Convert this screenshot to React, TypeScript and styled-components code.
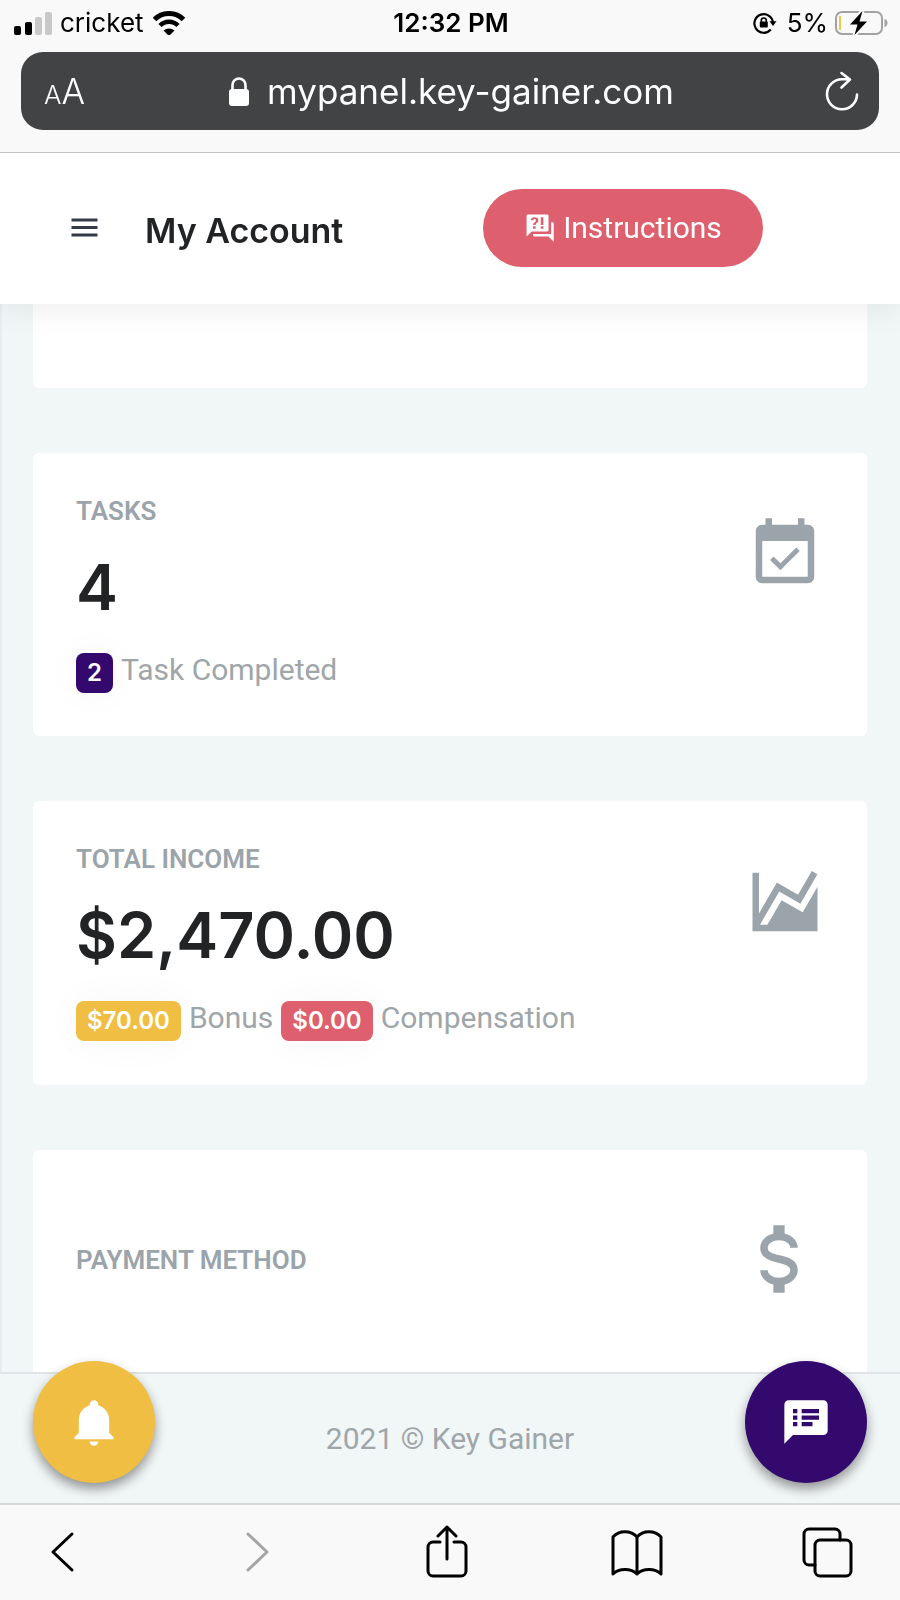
import React from 'react';
import styled, { createGlobalStyle } from 'styled-components';

const ui = "Inter, 'Liberation Sans', sans-serif";
const body = "Roboto, 'Liberation Sans', sans-serif";

const colors = {
  chrome: '#f9f9fa',
  page: '#f1f6f7',
  ink: '#212325',
  muted: '#9aa4aa',
  text: '#9fa6aa',
  amber: '#efbe43',
  rose: '#de5f6d',
  violet: '#33096e',
};

const GlobalStyle = createGlobalStyle`
  *, *::before, *::after { box-sizing: border-box; }
  body { margin: 0; background: ${colors.page}; }
  button { border: 0; padding: 0; background: none; cursor: pointer; font: inherit; color: inherit; }
  h1, h2, p { margin: 0; }
  svg { display: block; flex: none; }
`;

const Screen = styled.div`
  display: flex;
  flex-direction: column;
  height: 100vh;
  font-family: ${body};
  color: ${colors.ink};
`;

const Chrome = styled.div`
  position: relative;
  z-index: 2;
  flex: none;
  background: ${colors.chrome};
  border-bottom: 1px solid #bfc0c2;
  padding-bottom: 22px;
`;

const StatusBar = styled.div`
  display: grid;
  grid-template-columns: 1fr auto 1fr;
  align-items: center;
  height: 52px;
  padding: 0 12px 6px 14px;
  font-family: ${ui};
  font-size: 26px;
  line-height: 32px;
  color: #000;
`;

const StatusGroup = styled.div<{ $end?: boolean; $gap: number }>`
  display: flex;
  align-items: center;
  justify-content: ${(p) => (p.$end ? 'flex-end' : 'flex-start')};
  gap: ${(p) => p.$gap}px;
`;

const Clock = styled.time`
  font-weight: 600;
`;

const AddressBar = styled.div`
  display: grid;
  grid-template-columns: 1fr auto 1fr;
  align-items: center;
  height: 78px;
  margin: 0 21px;
  padding: 0 20px 0 23px;
  border-radius: 22px;
  background: #424344;
  color: #fff;
  font-family: ${ui};
`;

const TextSize = styled.button`
  display: flex;
  align-items: baseline;
  justify-self: start;
  padding-top: 4px;
  font-size: 35px;
  font-weight: 300;
  line-height: 44px;
  small { font-size: 26px; }
`;

const Address = styled.button`
  display: flex;
  align-items: center;
  gap: 18px;
  font-size: 35px;
  line-height: 44px;
`;

const Reload = styled.button`
  justify-self: end;
`;

const Header = styled.header`
  position: relative;
  z-index: 1;
  flex: none;
  display: flex;
  align-items: center;
  height: 151px;
  padding: 0 137px 2px 65px;
  background: #fff;
  box-shadow: 0 6px 30px rgba(0, 0, 0, 0.07);
`;

const Title = styled.h1`
  margin-left: 41px;
  padding-top: 6px;
  font-family: ${ui};
  font-size: 34px;
  font-weight: 600;
  line-height: 44px;
`;

const Instructions = styled.button`
  display: flex;
  align-items: center;
  justify-content: center;
  gap: 8px;
  width: 280px;
  height: 78px;
  margin-left: auto;
  border-radius: 39px;
  background: ${colors.rose};
  color: #fff;
  font-size: 30px;
  line-height: 40px;
`;

const Content = styled.main`
  flex: 1 1 0;
  min-height: 0;
  overflow-y: auto;
  scrollbar-width: none;
  display: flex;
  flex-direction: column;
  gap: 65px;
  padding: 0 33px 0 31px;
  border-left: 2px solid #e9edef;
  background: ${colors.page};
`;

const Card = styled.section<{ $height: number; $middle?: boolean }>`
  flex: none;
  display: flex;
  justify-content: space-between;
  align-items: flex-start;
  min-height: ${(p) => p.$height}px;
  padding: ${(p) => (p.$middle ? '94px' : '42px')} 43px 0;
  border-radius: 6px;
  background: #fff;
`;

const PreviousCard = styled(Card)`
  padding: 0;
  border-radius: 0 0 6px 6px;
`;

const CardIcon = styled.svg<{ $lift: number }>`
  margin-top: ${(p) => p.$lift}px;
  fill: ${colors.muted};
`;

const Label = styled.h2`
  font-family: ${body};
  font-size: 26px;
  font-weight: 600;
  line-height: 32px;
  text-transform: uppercase;
  color: ${colors.muted};
`;

const Amount = styled.p`
  margin-top: 20px;
  font-family: ${ui};
  font-size: 63px;
  font-weight: 600;
  line-height: 80px;
`;

const Details = styled.p`
  display: flex;
  align-items: center;
  gap: 8px;
  margin-top: 26px;
  font-size: 30px;
  line-height: 40px;
  color: ${colors.text};
`;

const DetailText = styled.span`
  padding-bottom: 6px;
  line-height: 34px;
`;

const Badge = styled.span<{ $color: string }>`
  padding: 0 11px;
  border-radius: 8px;
  background: ${(p) => p.$color};
  box-shadow: 0 0 40px rgba(0, 0, 0, 0.04);
  color: #fff;
  font-family: ${ui};
  font-size: 24px;
  font-weight: 600;
  line-height: 40px;
`;

const Footer = styled.footer`
  position: relative;
  z-index: 1;
  flex: none;
  display: flex;
  align-items: center;
  justify-content: center;
  height: 131px;
  border-top: 2px solid #e0e4e6;
  background: ${colors.page};
  font-size: 30px;
  line-height: 40px;
  color: ${colors.text};
`;

const Fab = styled.button<{ $side: 'left' | 'right'; $color: string }>`
  position: absolute;
  top: -13px;
  ${(p) => p.$side}: 33px;
  display: grid;
  place-items: center;
  width: 122px;
  height: 122px;
  border-radius: 50%;
  background: ${(p) => p.$color};
  box-shadow: 0 6px 12px rgba(0, 0, 0, 0.4);
  svg { fill: #fff; }
`;

const Toolbar = styled.nav`
  flex: none;
  display: flex;
  align-items: center;
  justify-content: space-between;
  height: 97px;
  padding: 0 45px 2px 36px;
  border-top: 2px solid #d6d8da;
  background: ${colors.chrome};
`;

const ToolButton = styled.button`
  svg {
    fill: none;
    stroke: #000;
    stroke-width: 3;
    stroke-linecap: round;
    stroke-linejoin: round;
  }
  &:disabled svg { stroke: #a5a5a7; }
`;

const Signal = () => (
  <svg width="38" height="24" viewBox="0 0 38 24" aria-label="Signal">
    <rect x="0" y="15" width="7" height="9" rx="2" />
    <rect x="11" y="11" width="7" height="13" rx="2" />
    <rect x="21" y="6" width="7" height="18" rx="2" fill="#c9c9ca" />
    <rect x="31" y="1" width="7" height="23" rx="2" fill="#c9c9ca" />
  </svg>
);

const Wifi = () => (
  <svg width="34" height="24" viewBox="0 0 34 24" aria-label="Wi-Fi">
    <path d="M2.500 8.500a20.500 20.500 0 0 1 29 0" fill="none" stroke="#000" strokeWidth="5" />
    <path d="M8 14.500a12.500 12.500 0 0 1 18 0" fill="none" stroke="#000" strokeWidth="4.500" />
    <path d="M11.500 19.500a8.500 8.500 0 0 1 11 0L17 25z" />
  </svg>
);

const RotationLock = () => (
  <svg width="27" height="22" viewBox="0 0 27 22" aria-label="Rotation locked">
    <path d="M17.800 17.500A9.300 9.300 0 1 1 20 11" fill="none" stroke="#000" strokeWidth="2.200" />
    <path d="M16.500 9.200h7L20 14z" />
    <path d="M8.300 10V8.500a2.500 2.500 0 0 1 5 0V10" fill="none" stroke="#000" strokeWidth="1.600" />
    <rect x="6.800" y="9.500" width="8" height="6" rx="1" />
  </svg>
);

const Battery = () => (
  <svg width="53" height="26" viewBox="0 0 53 26" aria-label="Battery charging">
    <rect x="1" y="2" width="46" height="22" rx="6" fill="none" stroke="#a2a2a4" strokeWidth="2" />
    <rect x="4" y="6" width="2" height="14" fill="#f2c945" />
    <path d="M49.500 9c4 1 4 7 0 8z" fill="#a2a2a4" />
    <path d="M27.500 1 15 14.500h7.500L19.500 25 32 11.500h-7.500z" stroke={colors.chrome} strokeWidth="4" />
    <path d="M27.500 1 15 14.500h7.500L19.500 25 32 11.500h-7.500z" />
  </svg>
);

const Lock = () => (
  <svg width="20" height="29" viewBox="0 0 20 29" fill="#fff" aria-hidden="true">
    <path d="M3.500 13V8a6.500 6.500 0 0 1 13 0v5" fill="none" stroke="#fff" strokeWidth="2.600" />
    <rect y="12" width="20" height="17" rx="3" />
  </svg>
);

const ReloadIcon = () => (
  <svg
    width="34"
    height="40"
    viewBox="0 0 34 40"
    fill="none"
    stroke="#fff"
    strokeWidth="2.600"
    strokeLinecap="round"
    strokeLinejoin="round"
    aria-hidden="true"
  >
    <path d="M24.500 8.300H17A15 15 0 1 0 32 23.500M16.500 2l8.500 6.500-8.500 8" />
  </svg>
);

const FaqIcon = () => (
  <svg width="31" height="31" viewBox="0 0 24 24" fill="#fff" aria-hidden="true">
    <path d="M18,15H6L2,19V3A1,1 0 0,1 3,2H18A1,1 0 0,1 19,3V14A1,1 0 0,1 18,15M23,9V23L19,19H8A1,1 0 0,1 7,18V17H21V8H22A1,1 0 0,1 23,9M8.190,4C7.320,4 6.620,4.200 6.080,4.590C5.560,5 5.300,5.570 5.310,6.360L5.320,6.390H7.250C7.260,6.090 7.350,5.860 7.530,5.700C7.710,5.550 7.930,5.470 8.190,5.470C8.500,5.470 8.760,5.570 8.940,5.750C9.120,5.940 9.200,6.200 9.200,6.500C9.200,6.820 9.130,7.090 8.970,7.320C8.830,7.550 8.620,7.750 8.360,7.910C7.850,8.250 7.500,8.550 7.310,8.820C7.110,9.080 7,9.500 7,10H9C9,9.690 9.040,9.440 9.130,9.260C9.220,9.080 9.390,8.900 9.640,8.740C10.090,8.500 10.460,8.210 10.750,7.810C11.040,7.410 11.190,7 11.190,6.500C11.190,5.740 10.920,5.130 10.380,4.680C9.850,4.230 9.120,4 8.190,4M7,11V13H9V11H7M13,13H15V11H13V13M13,4V10H15V4H13Z" />
  </svg>
);

const MenuIcon = () => (
  <svg width="39" height="39" viewBox="0 0 24 24" fill="#343a46" aria-hidden="true">
    <path d="M4 6.500h16v1.800H4zM4 11.100h16v1.800H4zM4 15.700h16v1.800H4z" />
  </svg>
);

export default function App() {
  return (
    <Screen>
      <GlobalStyle />
      <Chrome>
        <StatusBar>
          <StatusGroup $gap={8}>
            <Signal />
            <span>cricket</span>
            <Wifi />
          </StatusGroup>
          <Clock>12:32 PM</Clock>
          <StatusGroup $end $gap={7}>
            <RotationLock />
            <span>5%</span>
            <Battery />
          </StatusGroup>
        </StatusBar>
        <AddressBar>
          <TextSize aria-label="Text size">
            <small>A</small>A
          </TextSize>
          <Address>
            <Lock />
            mypanel.key-gainer.com
          </Address>
          <Reload aria-label="Reload">
            <ReloadIcon />
          </Reload>
        </AddressBar>
      </Chrome>

      <Header>
        <button aria-label="Menu">
          <MenuIcon />
        </button>
        <Title>My Account</Title>
        <Instructions>
          <FaqIcon />
          Instructions
        </Instructions>
      </Header>

      <Content>
        <PreviousCard $height={84} />
        <Card $height={283}>
          <div>
            <Label>Tasks</Label>
            <Amount>4</Amount>
            <Details>
              <Badge $color={colors.violet}>2</Badge>
              <DetailText>Task Completed</DetailText>
            </Details>
          </div>
          <CardIcon $lift={20} width="78" height="78" viewBox="0 0 24 24" aria-hidden="true">
            <path d="M16.530 11.060L15.470 10l-4.880 4.880-2.120-2.120-1.060 1.060L10.590 17l5.940-5.940zM19 3h-1V1h-2v2H8V1H6v2H5c-1.110 0-1.990.9-1.990 2L3 19c0 1.100.89 2 2 2h14c1.100 0 2-.9 2-2V5c0-1.100-.9-2-2-2zm0 16H5V8h14v11z" />
          </CardIcon>
        </Card>
        <Card $height={284}>
          <div>
            <Label>Total Income</Label>
            <Amount>$2,470.00</Amount>
            <Details>
              <Badge $color={colors.amber}>$70.00</Badge>
              <DetailText>Bonus</DetailText>
              <Badge $color={colors.rose}>$0.00</Badge>
              <DetailText>Compensation</DetailText>
            </Details>
          </div>
          <CardIcon $lift={20} width="78" height="78" viewBox="0 0 24 24" aria-hidden="true">
            <path d="M17.450,15.180L22,7.310V21H2V3H4V15.540L9.500,6L16,9.780L20.240,2.450L21.970,3.450L16.740,12.500L10.230,8.750L4.310,19H6.570L10.960,11.440L17.450,15.180Z" />
          </CardIcon>
        </Card>
        <Card $height={283} $middle>
          <Label>Payment Method</Label>
          <CardIcon $lift={-30} width="90" height="90" viewBox="0 0 24 24" aria-hidden="true">
            <path d="M7,15H9C9,16.080 10.370,17 12,17C13.630,17 15,16.080 15,15C15,13.900 13.960,13.500 11.760,12.970C9.640,12.440 7,11.780 7,9C7,7.210 8.470,5.690 10.500,5.180V3H13.500V5.180C15.530,5.690 17,7.210 17,9H15C15,7.920 13.630,7 12,7C10.370,7 9,7.920 9,9C9,10.100 10.040,10.500 12.240,11.030C14.360,11.560 17,12.220 17,15C17,16.790 15.530,18.310 13.500,18.820V21H10.500V18.820C8.470,18.310 7,16.790 7,15Z" />
          </CardIcon>
        </Card>
      </Content>

      <Footer>
        <span>2021 © Key Gainer</span>
        <Fab $side="left" $color={colors.amber} aria-label="Notifications">
          <svg width="52" height="52" viewBox="0 0 24 24">
            <path d="M21,19V20H3V19L5,17V11C5,7.900 7.030,5.170 10,4.290C10,4.190 10,4.100 10,4A2,2 0 0,1 12,2A2,2 0 0,1 14,4C14,4.100 14,4.190 14,4.290C16.970,5.170 19,7.900 19,11V17L21,19M14,21A2,2 0 0,1 12,23A2,2 0 0,1 10,21" />
          </svg>
        </Fab>
        <Fab $side="right" $color={colors.violet} aria-label="Messages">
          <svg width="52" height="52" viewBox="0 0 24 24">
            <path d="M20 2H4c-1.100 0-1.990.9-1.990 2L2 22l4-4h14c1.100 0 2-.9 2-2V4c0-1.100-.9-2-2-2zM8 14H6v-2h2v2zm0-3H6V9h2v2zm0-3H6V6h2v2zm7 6h-5v-2h5v2zm3-3h-8V9h8v2zm0-3h-8V6h8v2z" />
          </svg>
        </Fab>
      </Footer>

      <Toolbar aria-label="Browser">
        <ToolButton aria-label="Back">
          <svg width="54" height="54" viewBox="0 0 54 54">
            <path d="M36 9 17 27l19 18" />
          </svg>
        </ToolButton>
        <ToolButton aria-label="Forward" disabled>
          <svg width="54" height="54" viewBox="0 0 54 54">
            <path d="M21 9l19 18-19 18" />
          </svg>
        </ToolButton>
        <ToolButton aria-label="Share">
          <svg width="54" height="54" viewBox="0 0 54 54">
            <path d="M21 17h-7a5 5 0 0 0-5 5v24a5 5 0 0 0 5 5h28a5 5 0 0 0 5-5V22a5 5 0 0 0-5-5h-7M28 34V2M19 11l9-9 9 9" />
          </svg>
        </ToolButton>
        <ToolButton aria-label="Bookmarks">
          <svg width="54" height="54" viewBox="0 0 54 54">
            <path d="M27 12C21 5 9 5 3 12v37c6-6 18-6 24 0 6-6 18-6 24 0V12C45 5 33 5 27 12v37" />
          </svg>
        </ToolButton>
        <ToolButton aria-label="Tabs">
          <svg width="54" height="54" viewBox="0 0 54 54">
            <path d="M14 40H8a5 5 0 0 1-5-5V9a5 5 0 0 1 5-5h26a5 5 0 0 1 5 5v6" />
            <rect x="14" y="15" width="36" height="36" rx="5" />
          </svg>
        </ToolButton>
      </Toolbar>
    </Screen>
  );
}
